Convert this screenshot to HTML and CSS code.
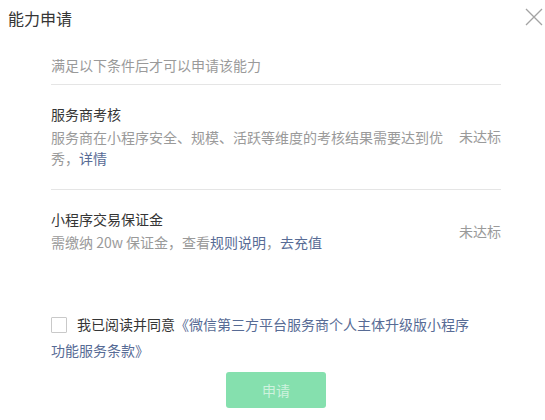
FILE: index.html
```html
<!DOCTYPE html>
<html>

<head>
    <meta charset="UTF-8">
    <title>能力申请</title>
    <link rel="stylesheet" href="styles.css">
</head>

<body>

    <div class="dialog">
        <div class="dialog-hd">
            <span class="dialog-title">能力申请</span>
            <svg class="close" width="18" height="18" viewBox="0 0 18 18">
                <path d="M1 1 L17 17 M17 1 L1 17" stroke="#a3a3a3" stroke-width="1.3" fill="none"/>
            </svg>
        </div>

        <div class="dialog-bd">
            <p class="tips">满足以下条件后才可以申请该能力</p>

            <div class="cond">
                <div class="cond-info">
                    <div class="cond-title">服务商考核</div>
                    <div class="cond-desc">服务商在小程序安全、规模、活跃等维度的考核结果需要达到优秀，<a>详情</a></div>
                </div>
                <div class="cond-status">未达标</div>
            </div>

            <div class="cond cond-last">
                <div class="cond-info">
                    <div class="cond-title">小程序交易保证金</div>
                    <div class="cond-desc">需缴纳 20w 保证金，查看<a>规则说明</a>，<a>去充值</a></div>
                </div>
                <div class="cond-status">未达标</div>
            </div>

            <div class="agree">
                <span class="checkbox"></span>我已阅读并同意<a>《微信第三方平台服务商个人主体升级版小程序功能服务条款》</a>
            </div>

            <button class="btn" type="button" disabled>申请</button>
        </div>
    </div>

</body>

</html>
```

FILE: styles.css
```css
body {
    font-family: "Noto Sans CJK SC", "Noto Sans", sans-serif;
    background-color: #fff;
    color: #353535;
    margin: 0;
}

a {
    color: #576b95;
}

.dialog-hd {
    display: flex;
    justify-content: space-between;
    padding: 8px 2px 0 8px;
}

.dialog-title {
    font-size: 16px;
    line-height: 20px;
}

.dialog-bd {
    margin: 0 44px 0 51px;
    font-size: 14px;
}

.tips {
    margin: 27px 0 0;
    padding-bottom: 9px;
    line-height: 20px;
    color: #9a9a9a;
    border-bottom: 1px solid #e5e5e5;
}

.cond {
    display: flex;
    align-items: center;
    padding: 18px 0 20px;
    border-bottom: 1px solid #e5e5e5;
}

.cond-last {
    border-bottom: 0;
}

.cond-info {
    flex: 1;
}

.cond-title {
    line-height: 22px;
}

.cond-desc {
    margin-top: 2px;
    line-height: 21px;
    color: #9a9a9a;
}

.cond-status {
    margin-left: 12px;
    white-space: nowrap;
    color: #9a9a9a;
}

.agree {
    max-width: 425px;
    margin-top: 38px;
    line-height: 26px;
}

.checkbox {
    display: inline-block;
    width: 14px;
    height: 14px;
    border: 1px solid #c9c9c9;
    border-radius: 1px;
    vertical-align: -3px;
    margin-right: 10px;
}

.btn {
    display: block;
    width: 100px;
    height: 36px;
    margin: 9px auto 0;
    border: 0;
    border-radius: 3px;
    background-color: #85e0ae;
    color: rgba(255, 255, 255, 0.6);
    font-family: inherit;
    font-size: 14px;
}
```
